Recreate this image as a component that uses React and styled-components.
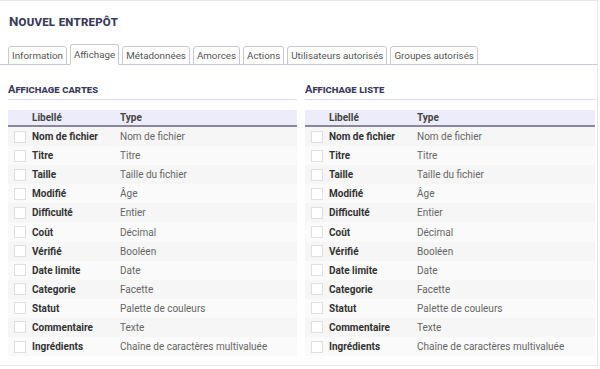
import React from 'react'
import styled, {createGlobalStyle} from 'styled-components'

const Global = createGlobalStyle`
  html, body { margin: 0; padding: 0; background: #fff; }
  body { font-family: Roboto, "Liberation Sans", sans-serif; }
`

const Panel = styled.div`
  box-sizing: border-box;
  margin-left: -1px;
  width: 599px;
  height: 366px;
  border: 1px solid #e6e6e6;
  background: #fff;
`

const Title = styled.h1`
  margin: 0;
  padding: 13px 0 0 9px;
  height: 34px;
  box-sizing: border-box;
  font-size: 13.3px;
  font-weight: 700;
  font-variant: small-caps;
  color: #3b3a5c;
  letter-spacing: 0.2px;
`

const TabBar = styled.div`
  display: flex;
  gap: 3px;
  padding: 9px 0 0 8px;
  border-bottom: 1px solid #c9c7d6;
`

const Tab = styled.div`
  box-sizing: border-box;
  height: ${p => (p.active ? '21px' : '19px')};
  margin-top: ${p => (p.active ? '0' : '2px')};
  margin-bottom: -1px;
  padding: 0 3px;
  border: 1px solid #c9c7d6;
  border-bottom: ${p => (p.active ? '1px solid #fff' : '1px solid #c9c7d6')};
  border-radius: 3px 3px 0 0;
  background: #fff;
  font-size: 9.8px;
  line-height: ${p => (p.active ? '19px' : '17px')};
  color: #555;
  white-space: nowrap;
`

const Columns = styled.div`
  display: grid;
  grid-template-columns: 289px 290px;
  gap: 8px;
  padding: 18px 0 0 8px;
`

const Section = styled.div``

const Heading = styled.h2`
  margin: 0;
  font-size: 11px;
  font-weight: 700;
  font-variant: small-caps;
  color: #3b3a5c;
  line-height: 13px;
  padding-bottom: 3px;
  border-bottom: 1px solid #dcdbe4;
`

const Table = styled.div`
  margin-top: 10px;
`

const HeadRow = styled.div`
  display: grid;
  grid-template-columns: 24px 88px 1fr;
  height: 15px;
  background: #ececfa;
  border-bottom: 2px solid #8a879c;
  font-size: 10px;
  font-weight: 700;
  color: #444;
  line-height: 16px;
`

const Row = styled.div`
  display: grid;
  grid-template-columns: 24px 88px 1fr;
  align-items: center;
  height: 19.1px;
  background: ${p => (p.odd ? '#f6f6f6' : '#fafafa')};
  font-size: 10px;
`

const Check = styled.span`
  box-sizing: border-box;
  width: 12px;
  height: 12px;
  margin-left: 6px;
  border: 1px solid #e0e0e0;
  background: #fff;
`

const Label = styled.span`
  font-weight: 700;
  color: #333;
`

const Type = styled.span`
  color: #666;
`

const fields = [
  ['Nom de fichier', 'Nom de fichier'],
  ['Titre', 'Titre'],
  ['Taille', 'Taille du fichier'],
  ['Modifié', 'Âge'],
  ['Difficulté', 'Entier'],
  ['Coût', 'Décimal'],
  ['Vérifié', 'Booléen'],
  ['Date limite', 'Date'],
  ['Categorie', 'Facette'],
  ['Statut', 'Palette de couleurs'],
  ['Commentaire', 'Texte'],
  ['Ingrédients', 'Chaîne de caractères multivaluée'],
]

const tabs = ['Information', 'Affichage', 'Métadonnées', 'Amorces', 'Actions', 'Utilisateurs autorisés', 'Groupes autorisés']

const FieldTable = ({title}) => (
  <Section>
    <Heading>{title}</Heading>
    <Table>
      <HeadRow>
        <span />
        <span>Libellé</span>
        <span>Type</span>
      </HeadRow>
      {fields.map(([label, type], i) => (
        <Row key={label} odd={i % 2 === 0}>
          <Check />
          <Label>{label}</Label>
          <Type>{type}</Type>
        </Row>
      ))}
    </Table>
  </Section>
)

const App = () => (
  <>
    <Global />
    <Panel>
      <Title>Nouvel entrepôt</Title>
      <TabBar>
        {tabs.map(t => (
          <Tab key={t} active={t === 'Affichage'}>{t}</Tab>
        ))}
      </TabBar>
      <Columns>
        <FieldTable title="Affichage cartes" />
        <FieldTable title="Affichage liste" />
      </Columns>
    </Panel>
  </>
)

export default App
